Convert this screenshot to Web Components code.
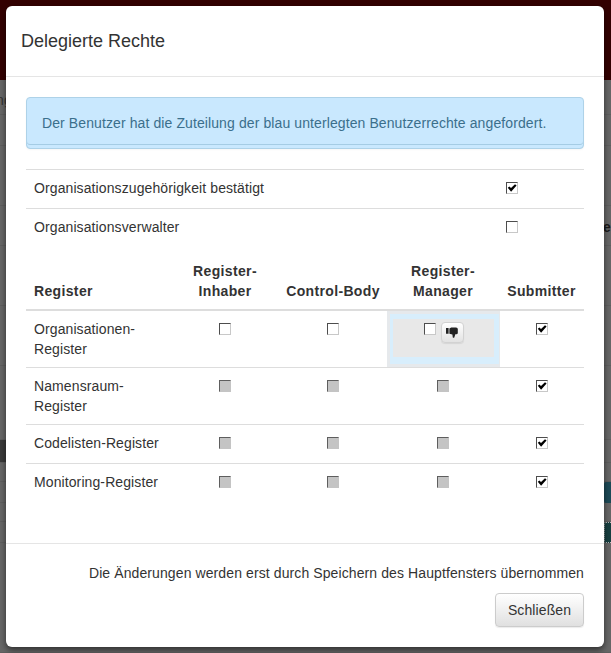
<!DOCTYPE html>
<html lang="de">
<head>
<meta charset="utf-8">
<title>Delegierte Rechte</title>
<style>
html, body { margin: 0; padding: 0; height: 100%; overflow: hidden; }
body { font-family: "Liberation Sans", Arial, sans-serif; font-size: 14px; letter-spacing: .1px; color: #333; background: #666; }
</style>
</head>
<body>
<page-backdrop></page-backdrop>
<modal-dialog>
  <span slot="title">Delegierte Rechte</span>
  <info-alert>Der Benutzer hat die Zuteilung der blau unterlegten Benutzerrechte angefordert.</info-alert>
  <flag-table></flag-table>
  <register-table></register-table>
  <span slot="note">Die Änderungen werden erst durch Speichern des Hauptfensters übernommen</span>
  <close-button slot="action">Schließen</close-button>
</modal-dialog>

<script>
class PageBackdrop extends HTMLElement {
  constructor() {
    super();
    // height, left bit, right bit of the page behind the modal
    const rows = [
      [35, '<b class="txt">ng</b>', ''],
      [31, '', ''],
      [60, '', ''],
      [40, '', '<b class="txt r">er</b>'],
      [60, '', ''],
      [60, '', ''],
      [74, '', ''],
      [23, '<i class="dark"></i>', ''],
      [19, '', ''],
      [21, '', '<i class="teal"></i>'],
      [19, '', ''],
      [21, '', '<i class="teal dots"></i>'],
      [110, '', '']
    ];
    const html = rows.map(([h, l, r]) =>
      `<div class="row" style="height:${h}px"><div class="l">${l}</div><div class="r-col">${r}</div></div>`).join('');
    this.attachShadow({ mode: 'open' }).innerHTML = `<style>
:host { display: flex; flex-direction: column; height: 653px; background: #676767; overflow: hidden; }
.bar { height: 80px; flex: none; background: #300; }
.row { flex: none; display: flex; justify-content: space-between; box-sizing: border-box; border-bottom: 1px solid #5f5f5f; }
.l { width: 6px; display: flex; }
.r-col { width: 7px; display: flex; }
.txt { font-weight: normal; color: #333; font-size: 14px; line-height: 40px; white-space: nowrap; flex: none; margin-left: -4px; }
.r { font-weight: bold; color: #1a1a1a; line-height: 20px; margin-top: 11px; margin-left: -1px; }
.dark { display: block; flex: 1; background: #3a3a3a; }
.teal { display: block; flex: 1; background: #1d4a57; border-radius: 2px 0 0 2px; margin-bottom: -1px; }
.dots { background: #173f40; border: 1px dotted #bbb; border-right: 0; }
</style><div class="bar"></div>${html}`;
  }
}

class ModalDialog extends HTMLElement {
  constructor() {
    super();
    this.attachShadow({ mode: 'open' }).innerHTML = `<style>
:host {
  position: absolute; left: 6px; top: 6px; width: 598px; height: 641px;
  display: flex; flex-direction: column; box-sizing: border-box;
  background: #fff; border-radius: 6px; box-shadow: 0 3px 6px rgba(0,0,0,.55);
}
header { flex: none; height: 71px; box-sizing: border-box; padding: 0 15px; border-bottom: 1px solid #e5e5e5;
  display: flex; align-items: center; font-size: 18px; letter-spacing: 0; color: #333; }
main { flex: 1; padding: 20px 20px 0; min-height: 0; }
footer { flex: none; height: 104px; box-sizing: border-box; border-top: 1px solid #e5e5e5; padding: 19px 20px 0;
  display: flex; flex-direction: column; align-items: flex-end; gap: 10px; }
.note { line-height: 20px; }
</style>
<header><slot name="title"></slot></header>
<main><slot></slot></main>
<footer><div class="note"><slot name="note"></slot></div><slot name="action"></slot></footer>`;
  }
}

class InfoAlert extends HTMLElement {
  constructor() {
    super();
    this.attachShadow({ mode: 'open' }).innerHTML = `<style>
:host {
  display: block; box-sizing: border-box; height: 52px; padding: 15px; line-height: 20px;
  background: #c9e8fe; color: #3b6f8c; border: 1px solid #aed2e8; border-radius: 4px;
  box-shadow: inset 0 -3px 0 #c9e8fe, inset 0 -4px 0 #a5cce4, 0 1px 2px rgba(0,0,0,.04);
  white-space: nowrap; margin-bottom: 20px;
}
</style><slot></slot>`;
  }
}

class PermCheck extends HTMLElement {
  static get observedAttributes() {
    return ['state'];
  }

  constructor() {
    super();
    this.attachShadow({ mode: 'open' });
    this.render();
  }

  attributeChangedCallback() {
    this.render();
  }

  render() {
    const state = this.getAttribute('state') ?? 'off';
    const mark = state === 'on'
      ? '<svg viewBox="0 0 10 10" width="10" height="10"><path d="M.8 4.8 2.4 3.4 4 5 8 1.2 9.6 2.6 4.1 8.8z" fill="#000"/></svg>'
      : '';
    this.shadowRoot.innerHTML = `<style>
:host { display: inline-block; width: 12px; height: 12px; margin: 4px 0 6px; vertical-align: top; }
div { box-sizing: border-box; width: 12px; height: 12px; background: #fff; border: 1px solid; border-color: #4d4d4d #c8c8c8 #c8c8c8 #4d4d4d; }
div.dis { background: #c4c4c4; border-color: #5e5e5e #c4c4c4 #c4c4c4 #5e5e5e; }
svg { display: block; }
</style><div class="${state === 'dis' ? 'dis' : ''}">${mark}</div>`;
  }
}

class ThumbButton extends HTMLElement {
  constructor() {
    super();
    this.attachShadow({ mode: 'open' }).innerHTML = `<style>
:host {
  display: inline-flex; align-items: center; justify-content: center; box-sizing: border-box;
  width: 23px; height: 21px; margin: 3px 0 0 5px; vertical-align: top;
  background: linear-gradient(#fff, #e2e2e2); border: 1px solid #d2d2d2; border-radius: 4px;
  box-shadow: 0 1px 1px rgba(0,0,0,.08);
}
</style>
<svg viewBox="0 0 12 11" width="12" height="11"><path fill="#222" d="M0 1H2.6V6.8H0zM3.4 1.6 5.2.4H10Q11.8.4 11.8 2V6Q11.8 7.2 10.2 7.2H9.3L8.3 10.4Q7.6 11.2 6.8 10.4L6.4 7.6 3.4 6.8z"/></svg>`;
  }
}

class FlagTable extends HTMLElement {
  constructor() {
    super();
    const rows = [
      ['Organisationszugehörigkeit bestätigt', 'on'],
      ['Organisationsverwalter', 'off']
    ];
    this.attachShadow({ mode: 'open' }).innerHTML = `<style>
:host { display: block; margin-bottom: 6px; }
.row { display: grid; grid-template-columns: 1fr 144px; border-top: 1px solid #ddd; height: 39px; box-sizing: border-box; }
.row > div { padding: 8px; line-height: 20px; }
.c { text-align: center; }
</style>${rows.map(([label, state]) =>
      `<div class="row"><div>${label}</div><div class="c"><perm-check state="${state}"></perm-check></div></div>`).join('')}`;
  }
}

class RegisterTable extends HTMLElement {
  constructor() {
    super();
    const heads = ['Register-<br>Inhaber', 'Control-Body', 'Register-<br>Manager', 'Submitter'];
    const rows = [
      ['Organisationen-Register', 'off', 'off', 'req', 'on'],
      ['Namensraum-Register', 'dis', 'dis', 'dis', 'on'],
      ['Codelisten-Register', 'dis', 'dis', 'dis', 'on'],
      ['Monitoring-Register', 'dis', 'dis', 'dis', 'on']
    ];
    const cell = (state) => state === 'req'
      ? '<div class="c req"><perm-check state="off"></perm-check><thumb-button></thumb-button></div>'
      : `<div class="c"><perm-check state="${state}"></perm-check></div>`;
    this.attachShadow({ mode: 'open' }).innerHTML = `<style>
:host { display: block; }
.row { display: grid; grid-template-columns: 145px 108px 108px 112px 85px; box-sizing: border-box; }
.row > div { padding: 8px; line-height: 20px; box-sizing: border-box; }
.head { border-bottom: 2px solid #ddd; font-weight: bold; letter-spacing: .35px; align-items: end; }
.body + .body { border-top: 1px solid #ddd; }
.row > .c { text-align: center; padding: 8px 0; }
.req {
  margin-right: -1px;
  background: #e8e8e8;
  box-shadow: inset 3px 3px 0 #e6e9ec, inset -1px -3px 0 #e6e9ec, inset 6px 8px 0 #d8eefc, inset -6px -10px 0 #d8eefc;
}
</style>
<div class="row head"><div>Register</div>${heads.map((h) => `<div class="c">${h}</div>`).join('')}</div>
${rows.map(([name, ...states]) =>
      `<div class="row body"><div>${name}</div>${states.map(cell).join('')}</div>`).join('')}`;
  }
}

class CloseButton extends HTMLElement {
  constructor() {
    super();
    this.attachShadow({ mode: 'open' }).innerHTML = `<style>
:host {
  display: block; box-sizing: border-box; width: 89px; height: 34px; line-height: 32px; text-align: center;
  background: linear-gradient(#fff, #e0e0e0); border: 1px solid #ccc; border-radius: 4px; color: #333;
  box-shadow: 0 1px 1px rgba(0,0,0,.08);
}
</style><slot></slot>`;
  }
}

customElements.define('perm-check', PermCheck);
customElements.define('thumb-button', ThumbButton);
customElements.define('page-backdrop', PageBackdrop);
customElements.define('modal-dialog', ModalDialog);
customElements.define('info-alert', InfoAlert);
customElements.define('flag-table', FlagTable);
customElements.define('register-table', RegisterTable);
customElements.define('close-button', CloseButton);
</script>
</body>
</html>
